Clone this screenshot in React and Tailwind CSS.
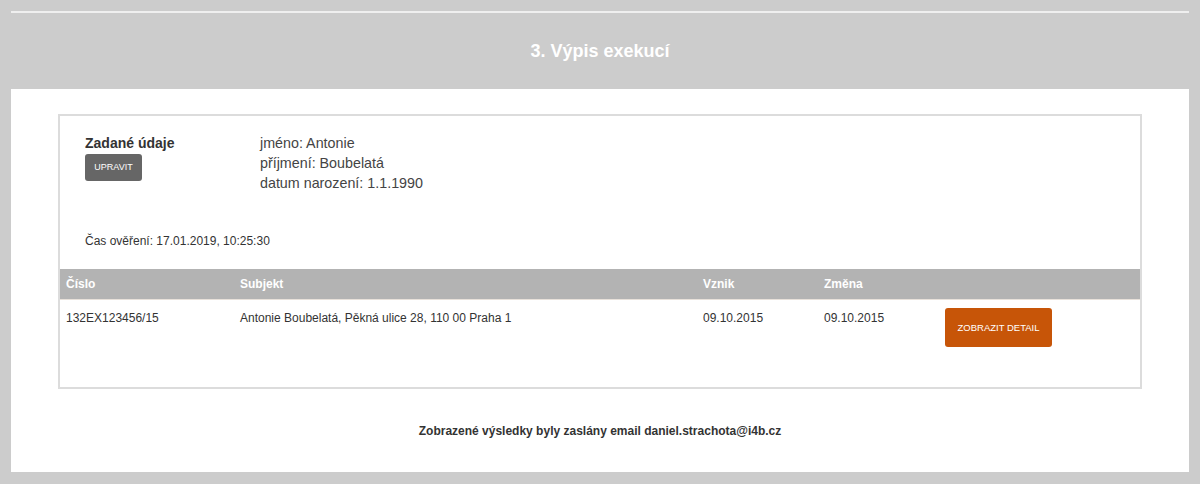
export default function App() {
  return (
    <div className="w-[1200px] h-[484px] bg-[#cccccc] font-['Liberation_Sans',Arial,sans-serif] overflow-hidden">
      <div className="pt-[11px] px-[11px]">
        <div className="h-[2px] bg-[#efefef]" />
      </div>
      <h1 className="h-[76px] flex items-center justify-center text-white font-bold text-[18px]">
        3. Výpis exekucí
      </h1>
      <div className="mx-[11px] bg-white h-[383px] pt-[25px] px-[47px]">
        <div className="border-2 border-[#dcdcdc] h-[275px]">
          <div className="pt-[17px] px-[25px]">
            <div className="flex">
              <div className="w-[175px]">
                <div className="text-[14px] leading-[20px] font-bold text-[#333]">Zadané údaje</div>
                <button className="mt-[1px] w-[57px] h-[27px] bg-[#666666] rounded-[3px] text-white text-[9px] leading-none">
                  UPRAVIT
                </button>
              </div>
              <div className="text-[14.3px] leading-[20px] text-[#444]">
                <div>jméno: Antonie</div>
                <div>příjmení: Boubelatá</div>
                <div>datum narození: 1.1.1990</div>
              </div>
            </div>
            <div className="mt-[40px] text-[12px] leading-[16px] text-[#333]">
              Čas ověření: 17.01.2019, 10:25:30
            </div>
          </div>
          <div className="mt-[20px]">
            <div className="grid grid-cols-[174px_463px_121px_121px_1fr] h-[31px] bg-[#b3b3b3] items-center text-white font-bold text-[12px] border-b border-[#e8e1da]">
              <div className="pl-[6px]">Číslo</div>
              <div className="pl-[6px]">Subjekt</div>
              <div className="pl-[6px]">Vznik</div>
              <div className="pl-[6px]">Změna</div>
              <div />
            </div>
            <div className="grid grid-cols-[174px_463px_121px_121px_1fr] text-[12px] leading-[16px] text-[#333]">
              <div className="pl-[6px] pt-[10px]">132EX123456/15</div>
              <div className="pl-[6px] pt-[10px]">Antonie Boubelatá, Pěkná ulice 28, 110 00 Praha 1</div>
              <div className="pl-[6px] pt-[10px]">09.10.2015</div>
              <div className="pl-[6px] pt-[10px]">09.10.2015</div>
              <div className="pl-[6px] pt-[8px]">
                <button className="w-[107px] h-[39px] bg-[#c75508] rounded-[3px] text-white text-[9.5px] leading-none">
                  ZOBRAZIT DETAIL
                </button>
              </div>
            </div>
          </div>
        </div>
        <div className="mt-[34px] text-center text-[12px] leading-[16px] font-bold text-[#333]">
          Zobrazené výsledky byly zaslány email daniel.strachota@i4b.cz
        </div>
      </div>
    </div>
  );
}
